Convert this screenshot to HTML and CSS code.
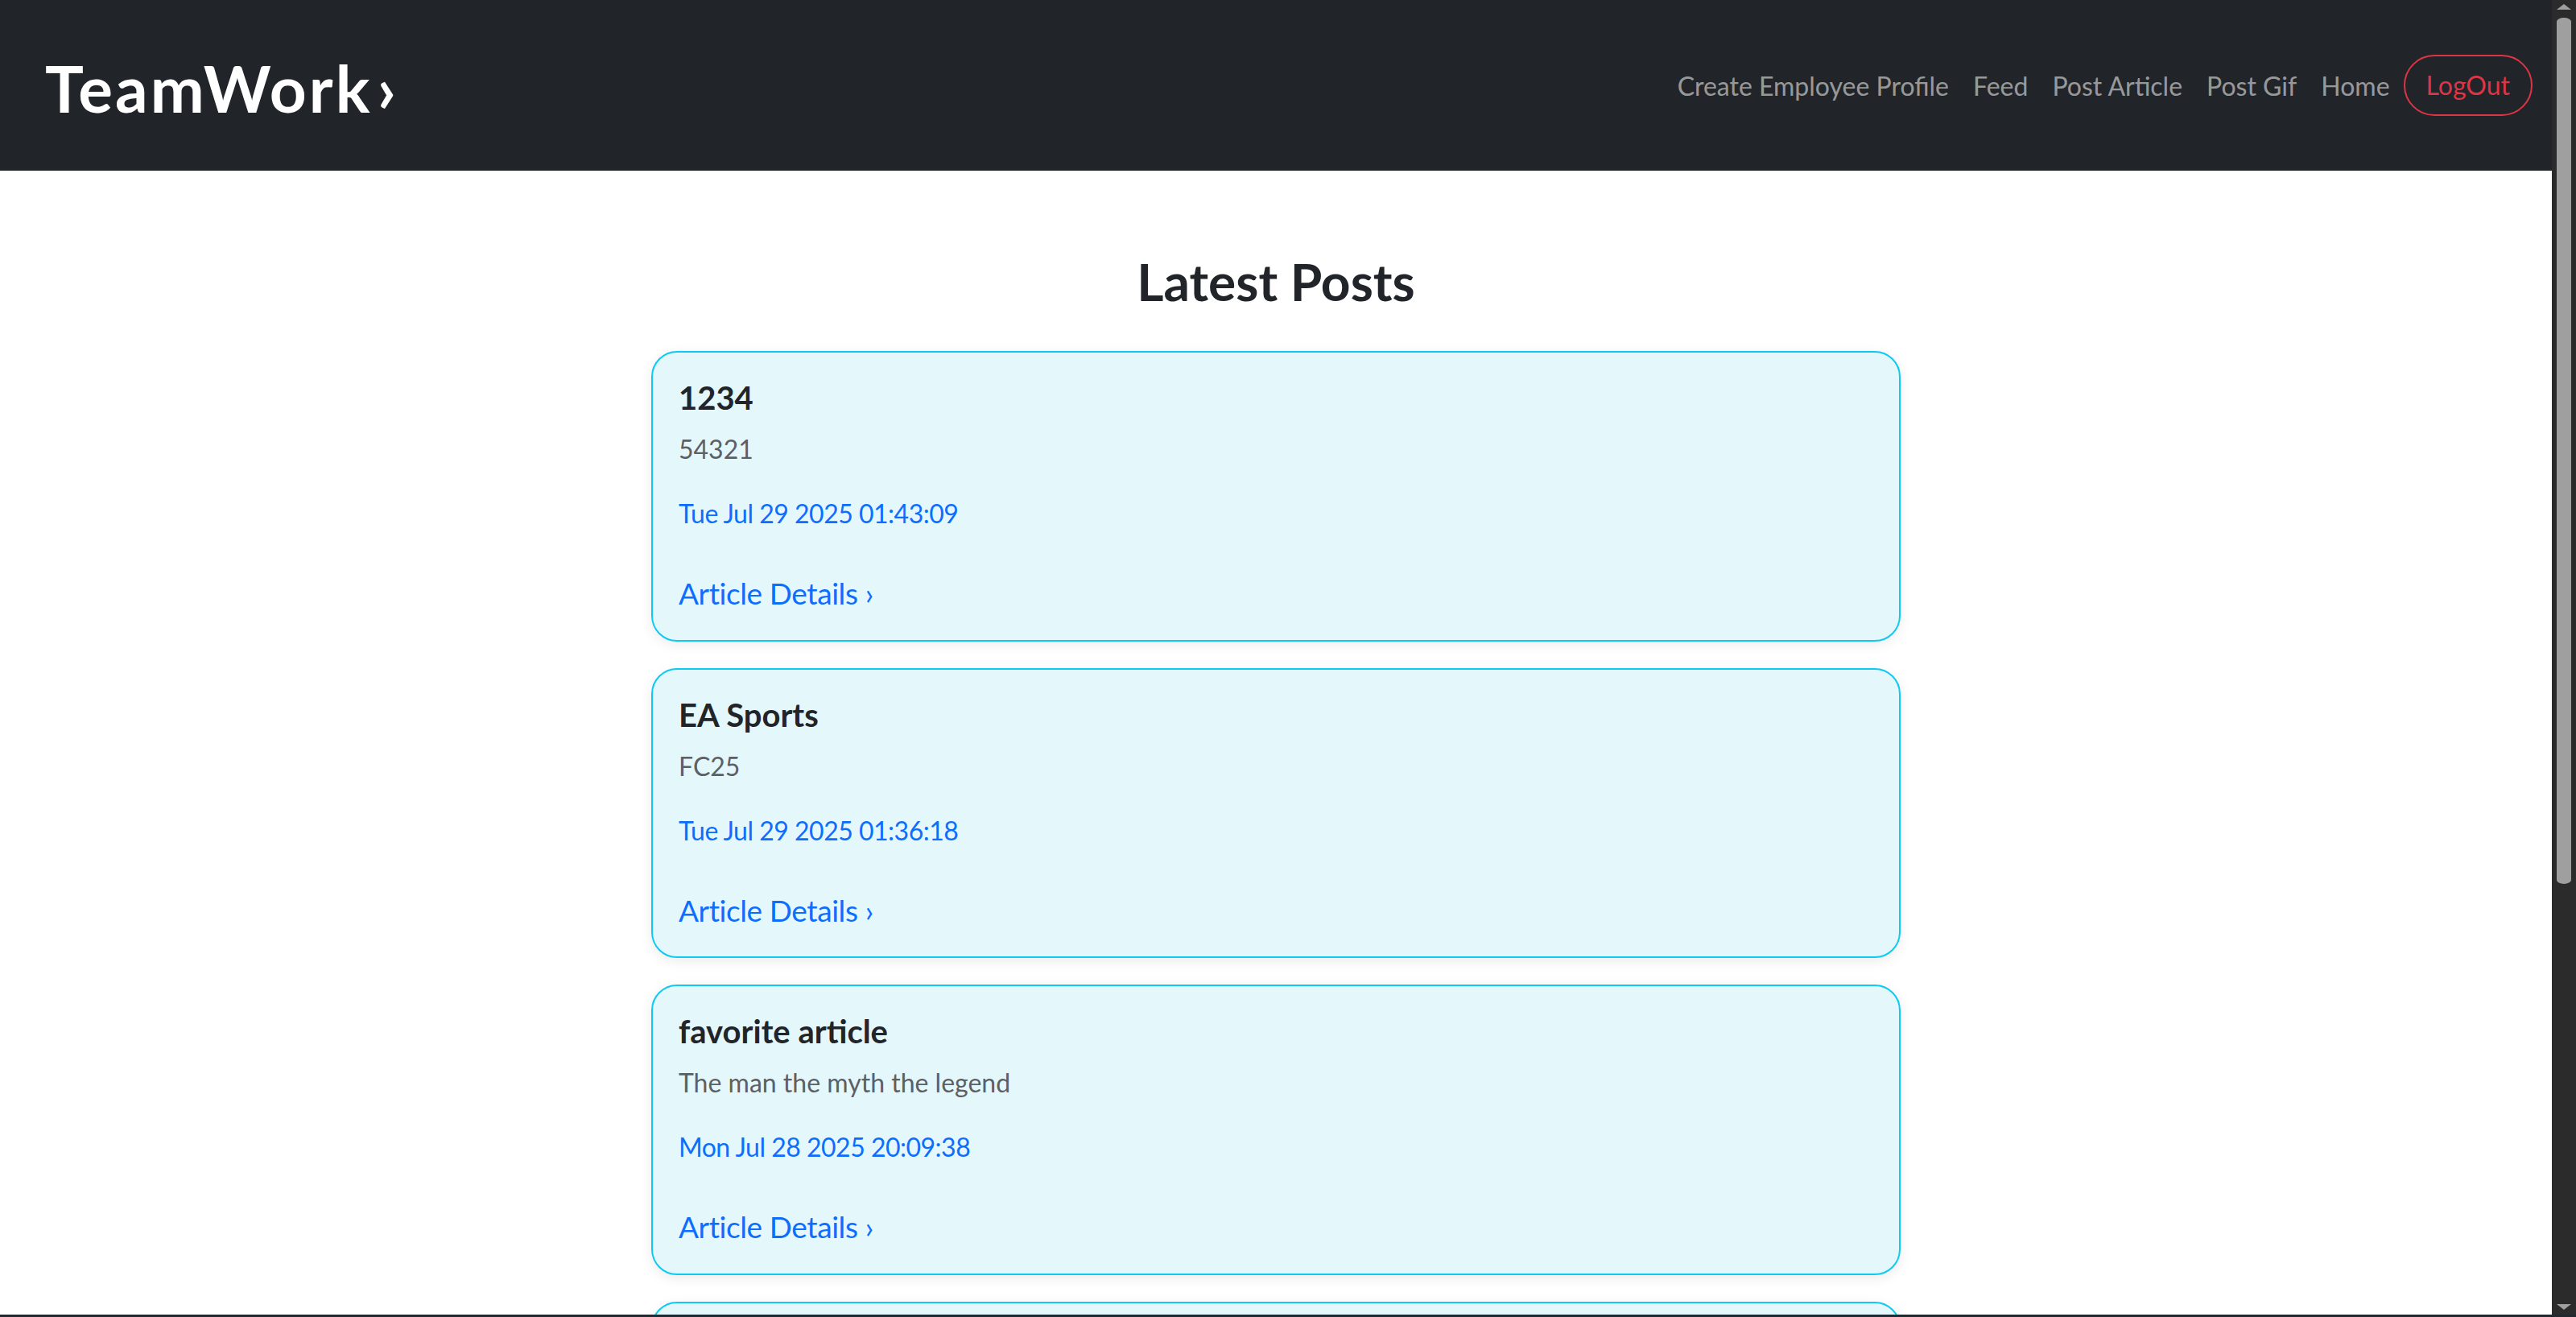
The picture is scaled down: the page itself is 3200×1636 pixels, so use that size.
FILE: index.html
```html
<!DOCTYPE html>
<html lang="en">
<head>
<meta charset="utf-8">
<title>TeamWork - Feed</title>
<link rel="stylesheet" href="styles.css">
</head>
<body>
<div class="app">
  <nav class="navbar">
    <a class="brand" href="#">TeamWork<span class="brand-chevron">›</span></a>
    <ul class="nav-links">
      <li><a class="nav-link" href="#">Create Employee Profile</a></li>
      <li><a class="nav-link" href="#">Feed</a></li>
      <li><a class="nav-link" href="#">Post Article</a></li>
      <li><a class="nav-link" href="#">Post Gif</a></li>
      <li><a class="nav-link" href="#">Home</a></li>
      <li><a class="btn-logout" href="#">LogOut</a></li>
    </ul>
  </nav>

  <main class="feed">
    <h2 class="feed-title">Latest Posts</h2>
    <div class="post-list">
      <article class="post-card">
        <h5 class="post-title">1234</h5>
        <p class="post-excerpt">54321</p>
        <p class="post-date">Tue Jul 29 2025 01:43:09</p>
        <a class="post-link" href="#">Article Details ›</a>
      </article>
      <article class="post-card">
        <h5 class="post-title">EA Sports</h5>
        <p class="post-excerpt">FC25</p>
        <p class="post-date">Tue Jul 29 2025 01:36:18</p>
        <a class="post-link" href="#">Article Details ›</a>
      </article>
      <article class="post-card">
        <h5 class="post-title">favorite article</h5>
        <p class="post-excerpt">The man the myth the legend</p>
        <p class="post-date">Mon Jul 28 2025 20:09:38</p>
        <a class="post-link" href="#">Article Details ›</a>
      </article>
      <article class="post-card post-card-empty"></article>
    </div>
  </main>
</div>

<div class="scrollbar">
  <svg class="scroll-arrow" width="18" height="8" viewBox="0 0 18 8"><path d="M0 8 L9 1 L18 8 Z" fill="#9f9f9f"/></svg>
  <div class="scroll-thumb"></div>
  <div class="scroll-space"></div>
  <svg class="scroll-arrow" width="18" height="8" viewBox="0 0 18 8"><path d="M0 0 L9 7 L18 0 Z" fill="#9f9f9f"/></svg>
</div>
<div class="taskbar-edge"></div>
</body>
</html>
```

FILE: styles.css
```css
html {
  overflow: hidden;
}

body {
  margin: 0;
  font-family: Lato, "Noto Sans", "DejaVu Sans", sans-serif;
  background: #ffffff;
  color: #212529;
}

.app {
  margin-right: 30px;
}

/* ---------- navbar ---------- */
.navbar {
  display: flex;
  align-items: center;
  justify-content: space-between;
  height: 212px;
  box-sizing: border-box;
  padding: 0 24px 0 56px;
  background: #212529;
}

.brand {
  color: #ffffff;
  font-size: 80px;
  font-weight: 700;
  line-height: 1.2;
  letter-spacing: 3px;
  text-decoration: none;
  padding-top: 6px;
}

.brand-chevron {
  margin-left: 6px;
}

.nav-links {
  display: flex;
  align-items: center;
  list-style: none;
  margin: 0;
  padding: 0;
}

.nav-link {
  display: block;
  padding: 2px 15px 0;
  font-size: 32px;
  line-height: 48px;
  color: rgba(255, 255, 255, 0.55);
  text-decoration: none;
}

.btn-logout {
  display: block;
  margin-left: 2px;
  padding: 12px 26px;
  font-size: 32px;
  line-height: 48px;
  color: #dc3545;
  border: 2px solid #dc3545;
  border-radius: 999px;
  text-decoration: none;
}

/* ---------- feed ---------- */
.feed {
  padding-top: 100px;
}

.feed-title {
  margin: 0 0 47px;
  text-align: center;
  font-size: 64px;
  font-weight: 700;
  line-height: 1.2;
  color: #212529;
}

.post-list {
  width: 1552px;
  margin: 0 auto;
  display: flex;
  flex-direction: column;
  gap: 33px;
}

.post-card {
  box-sizing: border-box;
  padding: 32px;
  background: #e4f8fc;
  border: 2px solid #0dcaf0;
  border-radius: 32px;
  box-shadow: 0 4px 16px rgba(0, 0, 0, 0.08);
}

.post-card-empty {
  height: 361px;
}

.post-title {
  margin: 0 0 16px;
  font-size: 40px;
  font-weight: 700;
  line-height: 1.2;
  color: #212529;
}

.post-excerpt {
  margin: 0 0 32px;
  font-size: 32px;
  line-height: 1.5;
  color: #5c6064;
}

.post-date {
  margin: 0 0 49px;
  font-size: 32px;
  line-height: 1.5;
  letter-spacing: -0.5px;
  color: #0d6efd;
}

.post-link {
  display: block;
  width: fit-content;
  font-size: 37px;
  line-height: 1.4;
  letter-spacing: -0.4px;
  color: #0d6efd;
  text-decoration: none;
}

/* ---------- window chrome overlays ---------- */
.scrollbar {
  position: fixed;
  top: 0;
  right: 0;
  bottom: 0;
  width: 30px;
  display: flex;
  flex-direction: column;
  align-items: center;
  padding: 4px 0 8px;
  box-sizing: border-box;
  background: #2b2b2b;
}

.scroll-thumb {
  width: 18px;
  height: 1076px;
  margin-top: 10px;
  border-radius: 9px / 5px;
  background: #9f9f9f;
}

.scroll-space {
  flex: 1;
}

.taskbar-edge {
  position: fixed;
  left: 0;
  right: 0;
  bottom: 0;
  height: 3px;
  background: #1f2a34;
}
```
